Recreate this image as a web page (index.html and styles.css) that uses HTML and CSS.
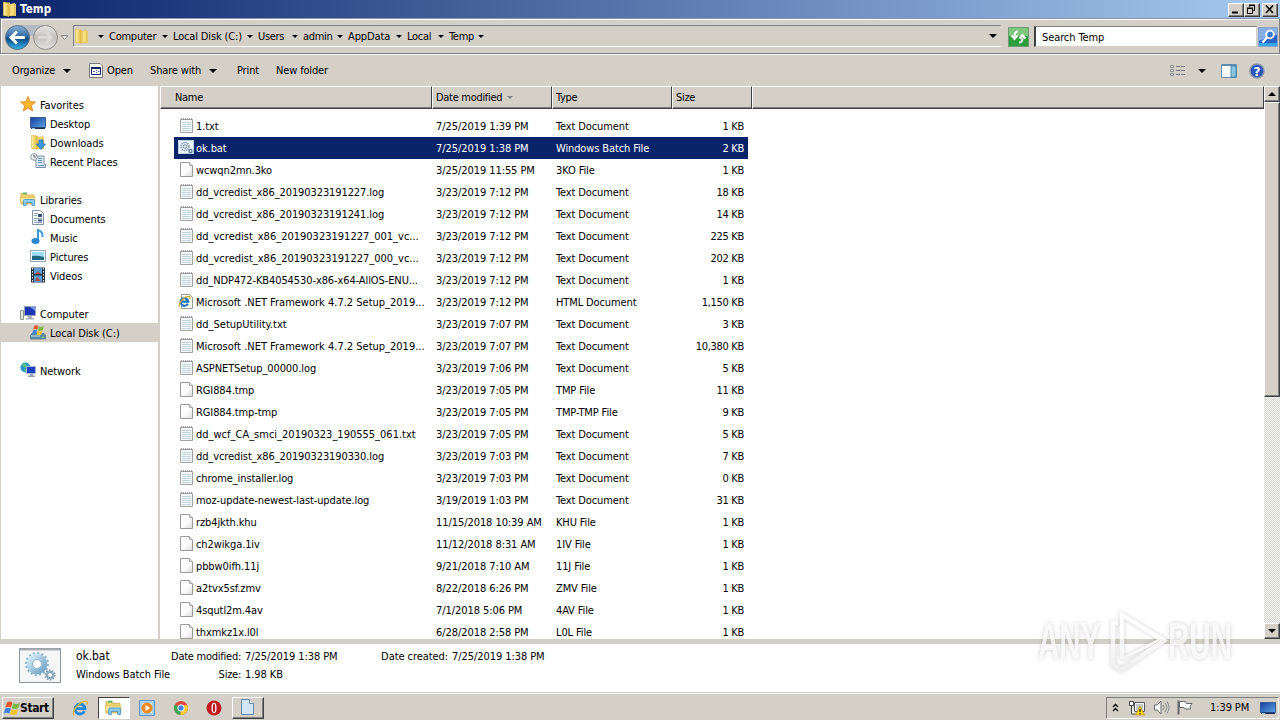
FILE: index.html
```html
<!DOCTYPE html>
<html lang="en">
<head>
    <meta charset="UTF-8">
    <title>Temp</title>
    <link rel="stylesheet" href="styles.css">
</head>
<body>
    <svg class="defs" width="0" height="0">
        <defs>
            <linearGradient id="g-fold" x1="0" x2="1"><stop offset="0" stop-color="#fff3a8"/><stop offset="1" stop-color="#e3b93c"/></linearGradient>
            <linearGradient id="g-blue" x1="0" y1="0" x2="0" y2="1"><stop offset="0" stop-color="#8ab2d8"/><stop offset=".45" stop-color="#2f6ba8"/><stop offset=".55" stop-color="#0c4a86"/><stop offset="1" stop-color="#38b6ea"/></linearGradient>
            <linearGradient id="g-grey" x1="0" y1="0" x2="0" y2="1"><stop offset="0" stop-color="#e9e7e4"/><stop offset=".5" stop-color="#c4c1bd"/><stop offset="1" stop-color="#e4e2df"/></linearGradient>
            <linearGradient id="g-screen" x1="0" y1="0" x2="1" y2="1"><stop offset="0" stop-color="#173f9c"/><stop offset="1" stop-color="#5ba4e6"/></linearGradient>
            <linearGradient id="g-page" x1="0" y1="0" x2="1" y2="1"><stop offset=".5" stop-color="#fff"/><stop offset="1" stop-color="#dcdcdc"/></linearGradient>
            <linearGradient id="g-gear" x1="0" y1="0" x2="1" y2="1"><stop offset="0" stop-color="#d5edf8"/><stop offset="1" stop-color="#6fa3c6"/></linearGradient>
            <linearGradient id="g-mark" gradientUnits="userSpaceOnUse" x1="0" y1="10" x2="0" y2="60"><stop offset=".4" stop-color="#fff"/><stop offset="1" stop-color="#ebebeb"/></linearGradient>
        </defs>
        <symbol id="folder" viewBox="0 0 16 16">
            <path d="M1.500 1.500h6L8.500 3H14v12H1.500z" fill="#e9c964"/>
            <path d="M1.500 1l5.500 1.500V15.500L1.500 14z" fill="url(#g-fold)" stroke="#d8b54a" stroke-width=".5"/>
            <path d="M8 3.500l4.500-1.500V14L8 15z" fill="#f6dc7c" stroke="#dbb850" stroke-width=".5"/>
        </symbol>
        <symbol id="txt" viewBox="0 0 16 16">
            <path d="M2.500 2.500h12v13h-12z" fill="#f4f9fb" stroke="#a2a2a2"/>
            <path d="M3.500 1v2M5.500 1v2M7.500 1v2M9.500 1v2M11.500 1v2M13.500 1v2" stroke="#8e8e8e" stroke-width=".8"/>
            <path d="M4 5.500h9M4 7.500h9M4 9.500h9M4 11.500h9M4 13.500h9" stroke="#c0d3de"/>
        </symbol>
        <symbol id="page" viewBox="0 0 16 16">
            <path d="M2.500 1.500h9l3 3v11h-12z" fill="url(#g-page)" stroke="#9a9a9a"/>
            <path d="M11.500 1.500v3h3" fill="#eee" stroke="#a8a8a8"/>
        </symbol>
        <symbol id="gear" viewBox="0 0 16 16">
            <rect x=".5" y="1.500" width="15" height="13" fill="#e8f3fa" stroke="#b9d3e6"/>
            <circle cx="7" cy="7.500" r="4" fill="none" stroke="#8498ae" stroke-width="1.600" stroke-dasharray="1.300 .8"/>
            <circle cx="7" cy="7.500" r="1.800" fill="none" stroke="#7088a4"/>
            <circle cx="12.500" cy="12" r="1.600" fill="none" stroke="#5579a0" stroke-width="1.200"/>
        </symbol>
        <symbol id="ie" viewBox="0 0 16 16">
            <path d="M12.500 11.200A5 5 0 1 1 13 8.700H4.500" fill="none" stroke="#2388d8" stroke-width="2.800"/>
            <path d="M2 15C-1 11 8 1.500 14 1.200c2.200 0 1.500 2.800.8 3.600" fill="none" stroke="#e8b824" stroke-width="1.300"/>
        </symbol>
        <symbol id="iepage" viewBox="0 0 16 16">
            <path d="M3.500 1.500h8l3 3v11h-11z" fill="#fff" stroke="#9a9a9a"/>
            <path d="M9.800 10.700A3.800 3.800 0 1 1 10.200 8.700H3.500" fill="none" stroke="#1f74c0" stroke-width="2.200"/>
            <path d="M1.500 14C-.5 11 6 3.500 10.500 3.300c1.800 0 1.500 1.500 1.200 2.500" fill="none" stroke="#d5a61c" stroke-width="1.200"/>
        </symbol>
        <symbol id="lib" viewBox="0 0 16 16">
            <path d="M1 2.500h5l1 1.500h7v9H1z" fill="#f3d673" stroke="#cfa93c" stroke-width=".8"/>
            <path d="M3 1.500h4v2H3z" fill="#5cb463"/>
            <path d="M.5 6.500H15v5H.5z" fill="#fbe9a0" stroke="#d8b650" stroke-width=".7"/>
            <path d="M3.500 14.500v-5q0-1 1-1h9q1 0 1 1v5h-2.500V11.500h-6v3z" fill="#8fd0f2" stroke="#3c8cc4" stroke-width=".8"/>
        </symbol>
        <symbol id="monitor" viewBox="0 0 16 16">
            <path d="M.5 2.500h15v10H.5z" fill="url(#g-screen)" stroke="#3a5a94"/>
            <path d="M1 12.500h14v1.500H1z" fill="#173059"/>
            <path d="M2 13h3v1H2z" fill="#8fd2f2"/>
        </symbol>
        <symbol id="flag" viewBox="0 0 16 16">
            <path d="M3 2.500q3-2 5.500 0L7 7.500Q4.500 5.800 1.500 7.500z" fill="#e8542c"/>
            <path d="M9.300 3.300q3 1.700 6.500-.3l-1.500 5q-3 2-6.500.3z" fill="#78b83c"/>
            <path d="M1.300 8.500q3-1.700 5.500 0L5.400 13.500Q3 11.800 0 13.500z" fill="#3f83dc"/>
            <path d="M7.600 9.300q3 1.700 6.500-.3l-1.500 5q-3 2-6.500.3z" fill="#f6c22c"/>
        </symbol>
    </svg>

    <div class="window">
        <div class="titlebar">
            <svg class="i16"><use href="#folder"/></svg>
            <span class="title">Temp</span>
            <div class="win-btn"><svg width="13" height="11"><path d="M3 8.500h6" stroke="#000" stroke-width="2"/></svg></div>
            <div class="win-btn"><svg width="13" height="11"><path d="M4.500 3V1.500h5v5H8M4 1h6" fill="none" stroke="#000"/><path d="M2.500 4.500h5v5h-5zM2 4h6" fill="none" stroke="#000"/></svg></div>
            <div class="win-btn close"><svg width="13" height="11"><path d="M3 1.500l7 7.500M10 1.500L3 9" stroke="#000" stroke-width="1.600"/></svg></div>
        </div>

        <div class="navbar">
            <svg class="nav-btns" width="70" height="30" viewBox="0 0 70 30">
                <rect x="16" y="3" width="30" height="11" fill="#b4bac2"/>
                <circle cx="17.500" cy="15.500" r="12" fill="url(#g-blue)" stroke="#5b7186"/>
                <path d="M25 15.500H11.500M17 9.500l-6 6 6 6" fill="none" stroke="#fff" stroke-width="3"/>
                <circle cx="45.500" cy="15.500" r="12" fill="url(#g-grey)" stroke="#8e8b88"/>
                <path d="M38 15.500h13M46 10l5.500 5.500-5.500 5.500" fill="none" stroke="#dedbd7" stroke-width="2.500"/>
                <path d="M61 13.500h7l-3.500 4z" fill="#eee" stroke="#8c8985"/>
            </svg>
            <div class="address">
                <svg class="i16"><use href="#folder"/></svg>
                <i class="arr a0"></i><span class="c1">Computer</span>
                <i class="arr"></i><span class="c2">Local Disk (C:)</span>
                <i class="arr"></i><span class="c3">Users</span>
                <i class="arr"></i><span class="c4">admin</span>
                <i class="arr"></i><span class="c5">AppData</span>
                <i class="arr"></i><span class="c6">Local</span>
                <i class="arr"></i><span class="c7">Temp</span>
                <i class="arr"></i>
                <i class="arr big drop"></i>
            </div>
            <svg class="refresh" width="21" height="20" viewBox="0 0 21 20">
                <rect x=".5" y=".5" width="20" height="19" fill="#2e9d3c" stroke="#6f9a74"/>
                <rect x="1" y="1" width="19" height="8" fill="#7cc680"/>
                <path d="M10 4.500Q6.500 4 6.500 10M3.500 8.500l3 3.500 3-3.500M11 15.500q3.500.5 3.500-5M11.500 11.500l3-3.500 3 3.500" fill="none" stroke="#fff" stroke-width="2"/>
            </svg>
            <div class="search">Search Temp</div>
            <svg class="search-btn" width="20" height="20" viewBox="0 0 20 20">
                <rect x=".5" y=".5" width="19" height="19" fill="#2a62c8" stroke="#8ca4c8"/>
                <path d="M1 1h18v7q-8 1-18 6z" fill="#86aee6"/>
                <path d="M1 16h18v3H1z" fill="#34a8e8"/>
                <circle cx="12" cy="7.500" r="3.800" fill="#3b78d4" stroke="#fff" stroke-width="1.800"/>
                <path d="M9 10.500l-4.500 5" stroke="#fff" stroke-width="2.400"/>
            </svg>
        </div>

        <div class="toolbar">
            <span class="t-organize">Organize</span><i class="arr big"></i>
            <svg class="open-ico" width="14" height="15" viewBox="0 0 14 15">
                <path d="M.5 .5h10.500l2.500 2.500v11.500H.5z" fill="#fff" stroke="#777"/>
                <path d="M2.500 4.500h9v7h-9z" fill="#fff" stroke="#15256a"/><path d="M2 5h10" stroke="#15256a" stroke-width="2"/>
                <path d="M4 8.500h2M7 7.500h1M9 8.500h1.500M7 9.500h1" stroke="#4466b0"/>
            </svg>
            <span class="t-open">Open</span>
            <span class="t-share">Share with</span><i class="arr big"></i>
            <span class="t-print">Print</span>
            <span class="t-new">New folder</span>
            <div class="tools">
                <svg width="16" height="14" viewBox="0 0 16 14">
                    <path d="M.5 1.500h3v2h-3zM.5 5.500h3v2h-3zM.5 9.500h3v2h-3z" fill="#fff" stroke="#8a8f94"/>
                    <path d="M6 2.500h4M11 2.500h4M6 6.500h4M11 6.500h4M6 10.500h4M11 10.500h4" stroke="#777d84"/>
                </svg>
                <i class="arr big"></i>
                <svg width="16" height="14" viewBox="0 0 16 14">
                    <path d="M.5 .5h15v13H.5z" fill="#fff" stroke="#5d8db0"/><path d="M1 1.500h14" stroke="#5d8db0"/>
                    <path d="M10 2h5v11h-5z" fill="#8cc6e6" stroke="#4b87ac"/>
                </svg>
                <svg width="16" height="16" viewBox="0 0 16 16">
                    <circle cx="8" cy="8" r="7" fill="#2a55bc" stroke="#8d97a8" stroke-width="1.500"/>
                    <text x="8" y="12.500" class="help">?</text>
                </svg>
            </div>
        </div>

        <div class="content">
            <div class="sidebar">
                <div class="node"><svg class="i16" viewBox="0 0 16 16"><path d="M8 .5l2 5.300 5.500.2-4.300 3.500 1.500 5.500L8 12l-4.700 3 1.500-5.500L.5 6 6 5.800z" fill="#fbb72c" stroke="#e08a2c"/></svg>Favorites</div>
                <div class="node sub"><svg class="i16"><use href="#monitor"/></svg>Desktop</div>
                <div class="node sub"><svg class="i16" viewBox="0 0 16 16"><use href="#folder"/><path d="M9 6h4v4h2.500L11 15.500 6.500 10H9z" fill="#3c9ae0" stroke="#1b68ac" stroke-width=".7"/></svg>Downloads</div>
                <div class="node sub"><svg class="i16" viewBox="0 0 16 16"><path d="M5 3h9v8h1.500v3.500H6V9z" fill="#dceaf4" stroke="#7890a4"/><path d="M8 5.500h4M8 7.500h4M8 9.500h4M8 12.500h6" stroke="#5f8fbc"/><circle cx="4" cy="4" r="3.300" fill="#f1f5f8" stroke="#9098a0"/><path d="M4 2v2h2" fill="none" stroke="#667"/></svg>Recent Places</div>
                <div class="node gap"><svg class="i16"><use href="#lib"/></svg>Libraries</div>
                <div class="node sub"><svg class="i16" viewBox="0 0 16 16"><path d="M2.500 .5h8l3 3v11h-11z" fill="#fff" stroke="#8195a8"/><path d="M4 3.500h4M4 5.500h3M4 8.500h8M4 10.500h3M4 12.500h8" stroke="#86a4c4"/><path d="M8 4h4v3H8zM8 9.500h4v2H8z" fill="#33507c"/></svg>Documents</div>
                <div class="node sub"><svg class="i16" viewBox="0 0 16 16"><path d="M8 0v12M8 1q5 1.500 4.500 7" fill="none" stroke="#3a9cd8" stroke-width="2"/><ellipse cx="5.500" cy="12" rx="4" ry="3" fill="#2b86d2"/></svg>Music</div>
                <div class="node sub"><svg class="i16" viewBox="0 0 16 16"><path d="M.5 2.500h15v11H.5z" fill="#fff" stroke="#8fa6b8"/><path d="M2 4h12v8H2z" fill="#9edcf4"/><path d="M2 8q5-1 12 1v3H2z" fill="#1f6a80"/></svg>Pictures</div>
                <div class="node sub"><svg class="i16" viewBox="0 0 16 16"><path d="M1 .5h14v15H1z" fill="#26323e"/><path d="M4 1h8v6H4zM4 8.500h8v6.500H4z" fill="#5b9cdc"/><path d="M8 4l3 3H5zM7 10l4 4H5z" fill="#a8543c"/><path d="M2.500 1v15M13.500 1v15" stroke="#eef" stroke-dasharray="1.500 1.500"/></svg>Videos</div>
                <div class="node gap"><svg class="i16" viewBox="0 0 16 16"><path d="M.5 5.500h3v9h-3z" fill="#dfe6dc" stroke="#88988a"/><path d="M4.500 1.500h11v9h-11z" fill="#1b35b4" stroke="#9aa4b8"/><path d="M10 2h5v4z" fill="#6f92ec"/><path d="M8 11h4v2h2v1.500H6V13h2z" fill="#a4adb8"/></svg>Computer</div>
                <div class="node sub active"><svg class="i16" viewBox="0 0 16 16"><path d="M2 9.500h12l1.500 2v3.500H.5v-3.500z" fill="#5b8ca8" stroke="#4d6c80" stroke-width=".7"/><path d="M1 12h9" stroke="#bde0ec"/><path d="M12 13.500h2" stroke="#7cf06c"/><use href="#flag" x="2" y="0" width="12" height="12"/></svg>Local Disk (C:)</div>
                <div class="node gap"><svg class="i16" viewBox="0 0 16 16"><circle cx="5.500" cy="5.500" r="5" fill="#2796cc"/><path d="M2 3q3-3 5 0L5 6zM3 8l3-1 1 3z" fill="#5fc86c"/><path d="M6.500 4.500h9v7h-9z" fill="#1c40c4" stroke="#a4b4cc"/><path d="M10 12h3v1.500h2V15H8v-1.500h2z" fill="#94a2b4"/></svg>Network</div>
            </div>

            <div class="files">
                <div class="header">
                    <div class="h name">Name</div>
                    <div class="h date">Date modified<i class="arr sort"></i></div>
                    <div class="h type">Type</div>
                    <div class="h size">Size</div>
                    <div class="h rest"></div>
                </div>
                <div class="rows">
                    <div class="row"><svg class="i16"><use href="#txt"/></svg><span class="name">1.txt</span><span class="date">7/25/2019 1:39 PM</span><span class="type">Text Document</span><span class="size">1 KB</span></div>
                    <div class="row selected"><svg class="i16"><use href="#gear"/></svg><span class="name">ok.bat</span><span class="date">7/25/2019 1:38 PM</span><span class="type">Windows Batch File</span><span class="size">2 KB</span></div>
                    <div class="row"><svg class="i16"><use href="#page"/></svg><span class="name">wcwqn2mn.3ko</span><span class="date">3/25/2019 11:55 PM</span><span class="type">3KO File</span><span class="size">1 KB</span></div>
                    <div class="row"><svg class="i16"><use href="#txt"/></svg><span class="name">dd_vcredist_x86_20190323191227.log</span><span class="date">3/23/2019 7:12 PM</span><span class="type">Text Document</span><span class="size">18 KB</span></div>
                    <div class="row"><svg class="i16"><use href="#txt"/></svg><span class="name">dd_vcredist_x86_20190323191241.log</span><span class="date">3/23/2019 7:12 PM</span><span class="type">Text Document</span><span class="size">14 KB</span></div>
                    <div class="row"><svg class="i16"><use href="#txt"/></svg><span class="name long">dd_vcredist_x86_20190323191227_001_vc...</span><span class="date">3/23/2019 7:12 PM</span><span class="type">Text Document</span><span class="size">225 KB</span></div>
                    <div class="row"><svg class="i16"><use href="#txt"/></svg><span class="name long">dd_vcredist_x86_20190323191227_000_vc...</span><span class="date">3/23/2019 7:12 PM</span><span class="type">Text Document</span><span class="size">202 KB</span></div>
                    <div class="row"><svg class="i16"><use href="#txt"/></svg><span class="name">dd_NDP472-KB4054530-x86-x64-AllOS-ENU...</span><span class="date">3/23/2019 7:12 PM</span><span class="type">Text Document</span><span class="size">1 KB</span></div>
                    <div class="row"><svg class="i16"><use href="#iepage"/></svg><span class="name long">Microsoft .NET Framework 4.7.2 Setup_2019...</span><span class="date">3/23/2019 7:12 PM</span><span class="type">HTML Document</span><span class="size">1,150 KB</span></div>
                    <div class="row"><svg class="i16"><use href="#txt"/></svg><span class="name long">dd_SetupUtility.txt</span><span class="date">3/23/2019 7:07 PM</span><span class="type">Text Document</span><span class="size">3 KB</span></div>
                    <div class="row"><svg class="i16"><use href="#txt"/></svg><span class="name long">Microsoft .NET Framework 4.7.2 Setup_2019...</span><span class="date">3/23/2019 7:07 PM</span><span class="type">Text Document</span><span class="size">10,380 KB</span></div>
                    <div class="row"><svg class="i16"><use href="#txt"/></svg><span class="name">ASPNETSetup_00000.log</span><span class="date">3/23/2019 7:06 PM</span><span class="type">Text Document</span><span class="size">5 KB</span></div>
                    <div class="row"><svg class="i16"><use href="#page"/></svg><span class="name">RGI884.tmp</span><span class="date">3/23/2019 7:05 PM</span><span class="type">TMP File</span><span class="size">11 KB</span></div>
                    <div class="row"><svg class="i16"><use href="#page"/></svg><span class="name">RGI884.tmp-tmp</span><span class="date">3/23/2019 7:05 PM</span><span class="type">TMP-TMP File</span><span class="size">9 KB</span></div>
                    <div class="row"><svg class="i16"><use href="#txt"/></svg><span class="name long">dd_wcf_CA_smci_20190323_190555_061.txt</span><span class="date">3/23/2019 7:05 PM</span><span class="type">Text Document</span><span class="size">5 KB</span></div>
                    <div class="row"><svg class="i16"><use href="#txt"/></svg><span class="name">dd_vcredist_x86_20190323190330.log</span><span class="date">3/23/2019 7:03 PM</span><span class="type">Text Document</span><span class="size">7 KB</span></div>
                    <div class="row"><svg class="i16"><use href="#txt"/></svg><span class="name">chrome_installer.log</span><span class="date">3/23/2019 7:03 PM</span><span class="type">Text Document</span><span class="size">0 KB</span></div>
                    <div class="row"><svg class="i16"><use href="#txt"/></svg><span class="name">moz-update-newest-last-update.log</span><span class="date">3/19/2019 1:03 PM</span><span class="type">Text Document</span><span class="size">31 KB</span></div>
                    <div class="row"><svg class="i16"><use href="#page"/></svg><span class="name">rzb4jkth.khu</span><span class="date">11/15/2018 10:39 AM</span><span class="type">KHU File</span><span class="size">1 KB</span></div>
                    <div class="row"><svg class="i16"><use href="#page"/></svg><span class="name">ch2wikga.1iv</span><span class="date">11/12/2018 8:31 AM</span><span class="type">1IV File</span><span class="size">1 KB</span></div>
                    <div class="row"><svg class="i16"><use href="#page"/></svg><span class="name">pbbw0ifh.11j</span><span class="date">9/21/2018 7:10 AM</span><span class="type">11J File</span><span class="size">1 KB</span></div>
                    <div class="row"><svg class="i16"><use href="#page"/></svg><span class="name">a2tvx5sf.zmv</span><span class="date">8/22/2018 6:26 PM</span><span class="type">ZMV File</span><span class="size">1 KB</span></div>
                    <div class="row"><svg class="i16"><use href="#page"/></svg><span class="name">4squtl2m.4av</span><span class="date">7/1/2018 5:06 PM</span><span class="type">4AV File</span><span class="size">1 KB</span></div>
                    <div class="row"><svg class="i16"><use href="#page"/></svg><span class="name">thxmkz1x.l0l</span><span class="date">6/28/2018 2:58 PM</span><span class="type">L0L File</span><span class="size">1 KB</span></div>
                </div>
            </div>

            <div class="scrollbar">
                <div class="sb-btn"><i class="arr big up"></i></div>
                <div class="thumb"></div>
                <div class="track"></div>
                <div class="sb-btn"><i class="arr big"></i></div>
            </div>
        </div>

        <div class="details">
            <svg class="big-gear" width="42" height="35" viewBox="0 0 42 35">
                <rect x=".5" y=".5" width="41" height="34" fill="#f4f6f8" stroke="#8f9499"/>
                <path d="M1 1.500h40" stroke="#aaafb4" stroke-width="2"/>
                <circle cx="18" cy="16" r="10.500" fill="none" stroke="#8fb8d0" stroke-width="3" stroke-dasharray="2.200 1.900"/>
                <circle cx="18" cy="16" r="7.500" fill="none" stroke="url(#g-gear)" stroke-width="5.500"/>
                <circle cx="18" cy="16" r="4.500" fill="#fff" stroke="#8eb0c4"/>
                <circle cx="31" cy="27" r="4.500" fill="none" stroke="#7397b0" stroke-width="2" stroke-dasharray="1.500 1.300"/>
                <circle cx="31" cy="27" r="3" fill="#fff" stroke="#89a9be" stroke-width="2"/>
            </svg>
            <div class="d-col d1"><div class="d-name">ok.bat</div><div class="d-kind">Windows Batch File</div></div>
            <div class="d-col d2"><div>Date modified:</div><div>Size:</div></div>
            <div class="d-col d3"><div>7/25/2019 1:38 PM</div><div>1.98 KB</div></div>
            <div class="d-col d4"><div>Date created:</div></div>
            <div class="d-col d5"><div>7/25/2019 1:38 PM</div></div>
        </div>
    </div>

    <div class="taskbar">
        <div class="start"><svg class="i16"><use href="#flag"/></svg><b>Start</b></div>
        <div class="task"><svg class="i16"><use href="#ie"/></svg></div>
        <div class="task pressed"><svg width="17" height="17"><use href="#lib"/></svg></div>
        <div class="task"><svg class="i16" viewBox="0 0 16 16"><path d="M.5 .5h15v15H.5z" fill="#a8d0f0" stroke="#5b94c8"/><path d="M3 3h10v10H3z" fill="#d8ebf8"/><circle cx="8" cy="8" r="5.500" fill="#f08c1c"/><path d="M6.500 5l4.500 3-4.500 3z" fill="#fff"/></svg></div>
        <div class="task"><svg width="14" height="14" viewBox="0 0 14 14"><circle cx="7" cy="7" r="7" fill="#e04a38"/><path d="M7 7L.9 3.500A7 7 0 0 0 6.500 14z" fill="#3ca652"/><path d="M7 7l-.5 7A7 7 0 0 0 13.400 4.300H8z" fill="#f6cc34"/><circle cx="7" cy="7" r="3.200" fill="#3f82ec" stroke="#fff" stroke-width="1"/></svg></div>
        <div class="task"><svg class="i16" viewBox="0 0 16 16"><circle cx="8" cy="8" r="7.500" fill="#c01c20"/><ellipse cx="8" cy="8" rx="2.500" ry="5.200" fill="#fff"/><ellipse cx="8" cy="8" rx="1.200" ry="4.300" fill="#c01c20"/></svg></div>
        <div class="task raised"><svg width="15" height="17" viewBox="0 0 15 17"><path d="M1.500 .5h8l4 4v11h-12z" fill="#d3e6f8" stroke="#6488b0"/><path d="M9.500 .5v4h4" fill="#fff" stroke="#6488b0"/></svg></div>
        <div class="tray">
            <svg class="chev" width="7" height="9"><path d="M1 4l2.500-2.500L6 4M1 8l2.500-2.500L6 8" fill="none" stroke="#000" stroke-width="1.300"/></svg>
            <svg class="net" width="16" height="16" viewBox="0 0 16 16"><path d="M5.500 2.500h10v9h-10z" fill="#f4f4f2" stroke="#55595d"/><path d="M7 4h7v6H7z" fill="#c7cbcf"/><path d="M.5 1.500h4v4h-4zM2.500 6v8h4" fill="#fff" stroke="#444"/><path d="M11 6l4.500 9h-9z" fill="#ffd820" stroke="#b48a08" stroke-width=".7"/><path d="M11 9v3M11 13v1.200" stroke="#222" stroke-width="1.300"/></svg>
            <svg class="vol" width="17" height="15" viewBox="0 0 17 15"><path d="M1.500 5h2.500l4-4v13l-4-4H1.500z" fill="#fff" stroke="#66696c"/><path d="M10 5q2 2.500 0 5M12 3q3.500 4.500 0 9M14 1.500q4 6 0 12" fill="none" stroke="#8a8c8e"/></svg>
            <svg class="act" width="16" height="15" viewBox="0 0 16 15"><path d="M1.500 .5v14" stroke="#66696c" stroke-width="2"/><path d="M2.500 1.500h6l1 2h5.500l-2 3 .5 2.500H8l-1-1.500H2.500z" fill="#fff" stroke="#66696c"/></svg>
            <span class="clock">1:39 PM</span>
            <svg class="i16"><use href="#monitor"/></svg>
        </div>
    </div>

    <svg class="watermark" width="210" height="72" viewBox="0 0 210 72">
        <text transform="translate(7 53) scale(.58 1)">ANY</text>
        <text transform="translate(137 53) scale(.58 1)">RUN</text>
        <path d="M91 53V9l42 25.500L90 64l-8-5V17h5" fill="none" stroke="url(#g-mark)" stroke-width="4.500"/>
        <path d="M91 53l37-19" fill="none" stroke="url(#g-mark)" stroke-width="3"/>
    </svg>
</body>
</html>
```
FILE: styles.css
```css
* {
    box-sizing: border-box;
}

body {
    margin: 0;
    width: 1280px;
    height: 720px;
    overflow: hidden;
    background: #d4d0c8;
    color: #000;
    font: 11px "DejaVu Sans Condensed", "DejaVu Sans", sans-serif;
    font-stretch: condensed;
    letter-spacing: -0.3px;
    white-space: nowrap;
}

svg {
    display: block;
    flex: none;
}

.defs {
    position: absolute;
}

.i16 {
    width: 16px;
    height: 16px;
    flex: none;
}

.window {
    height: 693px;
    display: flex;
    flex-direction: column;
}

/* title bar */
.titlebar {
    height: 18px;
    display: flex;
    align-items: center;
    padding: 0 2px;
    background: linear-gradient(to right, #0a246a, #a6caf0);
    color: #fff;
}

.title {
    flex: 1;
    margin-left: 2px;
    font-size: 11.5px;
    font-weight: bold;
    letter-spacing: 0.15px;
}

.win-btn {
    width: 16px;
    height: 14px;
    margin-top: 1px;
    background: #d4d0c8;
    border: 1px solid;
    border-color: #fff #404040 #404040 #fff;
    box-shadow: inset -1px -1px #808080;
}

.win-btn.close {
    margin-left: 2px;
}

/* small triangles */
.arr {
    flex: none;
    width: 0;
    height: 0;
    border: 3px solid transparent;
    border-top-color: #000;
    border-bottom: 0;
}

.arr.big {
    border-width: 4px 4px 0;
}

.arr.up {
    border-width: 0 4px 4px;
    border-color: transparent transparent #000;
    border-style: solid;
}

.arr.sort {
    margin-left: 5px;
    border-top-color: #808080;
}

/* address bar */
.navbar {
    height: 36px;
    display: flex;
    align-items: center;
    border: 1px solid #808080;
    border-top-color: #8c93ad;
    box-shadow: inset 1px 1px #fff, 0 1px #fff;
}

.nav-btns {
    margin: 1px 3px 0 -1px;
}

.address {
    width: 928px;
    height: 22px;
    display: flex;
    align-items: center;
    border: 1px solid #808080;
    border-color: #7b8086 transparent #fff #808080;
}

.address span {
    margin-left: 5px;
}

.a0 {
    margin-left: 8px;
}

.c1 { width: 53px; }
.c2 { width: 74px; letter-spacing: -0.15px; }
.c3 { width: 34px; }
.c4 { width: 34px; }
.c5 { width: 48px; letter-spacing: -0.1px; }
.c6 { width: 31px; }
.c7 { width: 29px; }

.address .c1 { letter-spacing: -0.25px; }

.drop {
    margin-left: auto;
    margin-right: 3px;
}

.refresh {
    margin: 2px 0 0 7px;
}

.search {
    width: 223px;
    height: 21px;
    margin: 1px 1px 0 5px;
    padding: 4px 6px;
    background: #fff;
    border: 1px solid #808080;
    border-color: #808080 #d4d0c8 #d4d0c8 #404040;
    border-left-width: 2px;
    letter-spacing: -0.1px;
}

.search-btn {
    margin-top: 1px;
}

/* toolbar */
.toolbar {
    height: 32px;
    display: flex;
    align-items: center;
    padding: 1px 15px 0 12px;
    letter-spacing: -0.15px;
}

.t-organize { width: 51px; }
.open-ico { margin-left: 18px; }
.t-open { width: 43px; margin-left: 4px; }
.t-share { width: 59px; }
.t-print { width: 39px; margin-left: 20px; }

.tools {
    display: flex;
    align-items: center;
    margin-left: auto;
}

.tools .arr { margin: 0 15px 0 12px; }
.tools svg:last-child { margin-left: 12px; }

.help {
    font: bold 12px "DejaVu Sans", sans-serif;
    fill: #fff;
    text-anchor: middle;
}

/* content */
.content {
    height: 553px;
    display: flex;
}

.sidebar {
    width: 158px;
    padding-top: 9px;
    background: #fff;
    border-left: 1px solid #d4d0c8;
    letter-spacing: -0.1px;
}

.node {
    height: 19px;
    display: flex;
    align-items: center;
    gap: 4px;
    padding: 1px 0 0 19px;
}

.node .i16 {
    margin-top: -2px;
}

.node.sub {
    padding-left: 29px;
}

.node.gap {
    margin-top: 19px;
}

.node.active {
    background: #d4d0c8;
}

.files {
    flex: 1;
    height: 553px;
    margin-left: 2px;
    background: #fff;
    overflow: hidden;
}

.header {
    height: 23px;
    display: flex;
    background: #d4d0c8;
}

.h {
    display: flex;
    align-items: center;
    padding: 0 0 0 4px;
    border: 1px solid;
    border-color: #fff #404040 #404040 #fff;
    box-shadow: inset 0 -1px #808080;
}

.h.name { width: 272px; padding-left: 14px; }
.h.date { width: 120px; padding-left: 3px; }
.h.type { width: 120px; padding-left: 3px; }
.h.size { width: 80px; padding-left: 3px; }
.h.rest { flex: 1; }

.rows {
    padding: 6px 0 0 14px;
}

.row {
    width: 574px;
    height: 22px;
    display: flex;
    align-items: center;
    padding-left: 4px;
}

.row .i16 { margin-right: 2px; margin-top: -2px; }
.row .name { width: 240px; letter-spacing: -0.1px; }
.row .name.long { letter-spacing: 0; }
.row .date { width: 120px; letter-spacing: -0.07px; }
.row .type { width: 120px; letter-spacing: -0.12px; }
.row .size { width: 68px; text-align: right; }

.row.selected {
    background: #0a246a;
    color: #fff;
}

/* scrollbar */
.scrollbar {
    width: 16px;
    display: flex;
    flex-direction: column;
}

.sb-btn,
.thumb {
    display: flex;
    align-items: center;
    justify-content: center;
    background: #d4d0c8;
    border: 1px solid;
    border-color: #fff #404040 #404040 #fff;
    box-shadow: inset -1px -1px #808080;
}

.sb-btn { height: 16px; }
.thumb { height: 295px; }

.track {
    flex: 1;
    background: repeating-conic-gradient(#fff 0 25%, #d4d0c8 0 50%) 0 0 / 2px 2px;
}

/* details pane */
.details {
    height: 54px;
    display: flex;
    padding: 8px 0 0 19px;
    background: #fff;
    border-top: 5px solid #d4d0c8;
    border-bottom: 1px solid #d4d0c8;
    letter-spacing: -0.07px;
}

.big-gear {
    margin-top: -4px;
}

.d-col {
    margin-top: -2px;
}

.d-col div {
    height: 18px;
}

.d1 { width: 94px; margin-left: 15px; }
.d2 { width: 71px; text-align: right; letter-spacing: -0.25px; }
.d3 { width: 132px; margin-left: 4px; }
.d4 { width: 71px; text-align: right; }
.d5 { margin-left: 4px; }

.d-name {
    font-size: 12px;
    line-height: 13px;
}

/* taskbar */
.taskbar {
    height: 27px;
    display: flex;
    align-items: center;
    padding: 2px 1px 1px 2px;
    border-top: 1px solid #fff;
}

.start,
.task.raised {
    background: #d4d0c8;
    border: 1px solid;
    border-color: #fff #404040 #404040 #fff;
    box-shadow: inset -1px -1px #808080;
}

.start {
    width: 52px;
    height: 22px;
    display: flex;
    align-items: center;
    padding-left: 1px;
    margin-right: 10px;
}

.start b {
    font-size: 12px;
    letter-spacing: -0.4px;
}

.task {
    width: 32px;
    height: 22px;
    margin-right: 1.6px;
    display: flex;
    align-items: center;
    justify-content: center;
}

.task.pressed {
    background: #fff;
    border: 1px solid;
    border-color: #404040 #fff #fff #404040;
}

.tray {
    width: 173px;
    height: 22px;
    margin-left: auto;
    display: flex;
    align-items: center;
    padding-left: 5px;
    border: 1px solid;
    border-color: #808080 #fff #fff #808080;
}

.net { margin-left: 10px; }
.vol { margin-left: 8px; }
.act { margin-left: 7px; }

.clock {
    width: 42px;
    margin: 0 8px 0 17px;
    letter-spacing: -0.1px;
}

/* watermark lies over the file list and the details pane */
.watermark {
    position: absolute;
    left: 1031px;
    top: 606px;
    opacity: 0.75;
    filter: drop-shadow(0 0 2px rgba(0, 0, 0, 0.25));
}

.watermark text {
    font: bold 51px "Liberation Sans", sans-serif;
    letter-spacing: 0;
    fill: url(#g-mark);
    fill: #f8f8f8;
}
```
